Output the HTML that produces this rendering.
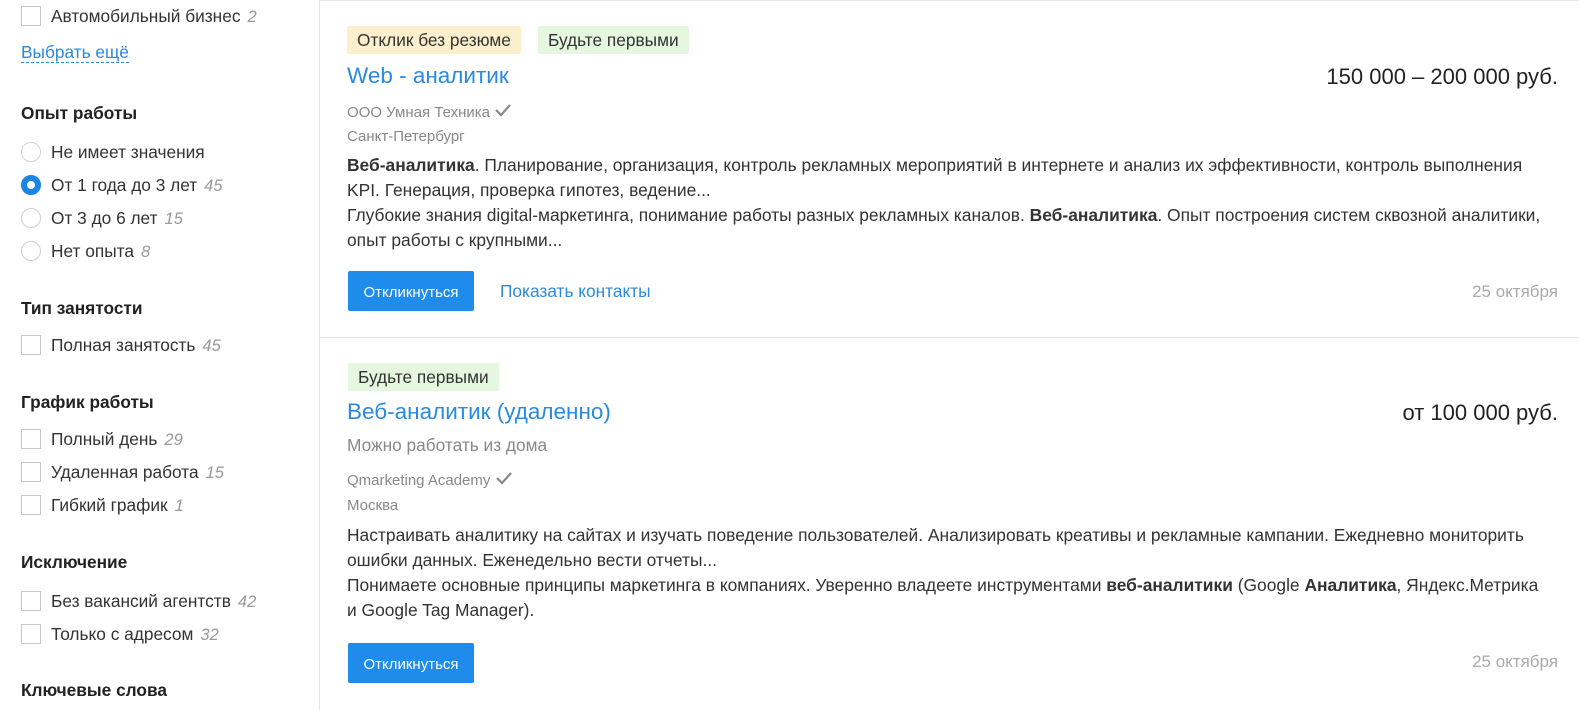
<!DOCTYPE html>
<html style="overflow:hidden;width:1579px;height:710px"><head><meta charset="utf-8"><style>
*{margin:0;padding:0;box-sizing:border-box}
body{width:1579px;height:710px;overflow:hidden;background:#fff;font-family:"Liberation Sans",Arial,sans-serif;color:#222;position:relative}
.a{position:absolute;white-space:nowrap}
.cb{position:absolute;width:20px;height:20px;border:1px solid #c8c8c8;background:#fff}
.rb{position:absolute;width:20px;height:20px;border:1px solid #d0d0d0;border-radius:50%;background:#fff}
.rb.on{border:6px solid #1a85e6}
.lbl{font-size:17.3px;color:#333}
.n{font-style:italic;color:#999;font-size:16.5px;margin-left:7px}
.h{font-size:17.3px;font-weight:bold;color:#222}
.tag{position:absolute;height:28px;line-height:28px;padding:0 10px;font-size:17.3px;color:#333;border-radius:2px}
.title{font-size:22.5px;color:#2a8ae0}
.sal{font-size:22px;color:#222}
.grey{font-size:15px;color:#888}
.txt{font-size:17.4px;color:#333;line-height:25px}
.btn{position:absolute;width:126px;height:40px;background:#1f8ceb;color:#fff;font-size:15px;text-align:center;line-height:43px;border-radius:2px}
.date{font-size:17px;color:#aaa}
</style></head><body>
<div class="a" style="left:319px;top:0;width:1px;height:710px;background:#e6e6e6"></div>
<div class="a" style="left:320px;top:0;width:1260px;height:1px;background:#e6e6e6"></div>
<div class="a" style="left:320px;top:337px;width:1260px;height:1px;background:#e6e6e6"></div>

<div class="cb" style="left:21px;top:6px"></div><div class="a lbl" style="left:51px;top:6px">Автомобильный бизнес<span class="n">2</span></div>
<div class="a" style="left:21px;top:42px;font-size:17.3px;color:#2a8ae0;border-bottom:1px dashed #2a8ae0;line-height:20px">Выбрать ещё</div>

<div class="a h" style="left:21px;top:103px">Опыт работы</div>
<div class="rb" style="left:21px;top:142px"></div><div class="a lbl" style="left:51px;top:142px">Не имеет значения</div>
<div class="rb on" style="left:21px;top:175px"></div><div class="a lbl" style="left:51px;top:175px">От 1 года до 3 лет<span class="n">45</span></div>
<div class="rb" style="left:21px;top:208px"></div><div class="a lbl" style="left:51px;top:208px">От 3 до 6 лет<span class="n">15</span></div>
<div class="rb" style="left:21px;top:241px"></div><div class="a lbl" style="left:51px;top:241px">Нет опыта<span class="n">8</span></div>

<div class="a h" style="left:21px;top:298px">Тип занятости</div>
<div class="cb" style="left:21px;top:335px"></div><div class="a lbl" style="left:51px;top:335px">Полная занятость<span class="n">45</span></div>

<div class="a h" style="left:21px;top:392px">График работы</div>
<div class="cb" style="left:21px;top:429px"></div><div class="a lbl" style="left:51px;top:429px">Полный день<span class="n">29</span></div>
<div class="cb" style="left:21px;top:462px"></div><div class="a lbl" style="left:51px;top:462px">Удаленная работа<span class="n">15</span></div>
<div class="cb" style="left:21px;top:495px"></div><div class="a lbl" style="left:51px;top:495px">Гибкий график<span class="n">1</span></div>

<div class="a h" style="left:21px;top:552px">Исключение</div>
<div class="cb" style="left:21px;top:591px"></div><div class="a lbl" style="left:51px;top:591px">Без вакансий агентств<span class="n">42</span></div>
<div class="cb" style="left:21px;top:624px"></div><div class="a lbl" style="left:51px;top:624px">Только с адресом<span class="n">32</span></div>
<div class="a h" style="left:21px;top:680px">Ключевые слова</div>

<!-- card 1 -->
<div class="tag" style="left:347px;top:26px;background:#fcf0cc">Отклик без резюме</div>
<div class="tag" style="left:538px;top:26px;background:#e6f7e0">Будьте первыми</div>
<div class="a title" style="left:347px;top:63px">Web - аналитик</div>
<div class="a sal" style="right:21px;top:64px">150 000 – 200 000 руб.</div>
<div class="a grey" style="left:347px;top:103px">ООО Умная Техника <svg width="18" height="14" viewBox="0 0 18 14" style="vertical-align:0"><path d="M2 7l5 5L16 2" stroke="#888" stroke-width="2.2" fill="none"/></svg></div>
<div class="a grey" style="left:347px;top:128px">Санкт-Петербург</div>
<div class="a txt" style="left:347px;top:153px"><b>Веб-аналитика</b>. Планирование, организация, контроль рекламных мероприятий в интернете и анализ их эффективности, контроль выполнения<br>KPI. Генерация, проверка гипотез, ведение...<br>Глубокие знания digital-маркетинга, понимание работы разных рекламных каналов. <b>Веб-аналитика</b>. Опыт построения систем сквозной аналитики,<br>опыт работы с крупными...</div>
<div class="btn" style="left:348px;top:271px">Откликнуться</div>
<div class="a" style="left:500px;top:281px;font-size:17.3px;color:#2a8ae0">Показать контакты</div>
<div class="a date" style="right:21px;top:282px">25 октября</div>

<!-- card 2 -->
<div class="tag" style="left:348px;top:363px;background:#e6f7e0">Будьте первыми</div>
<div class="a title" style="left:347px;top:399px">Веб-аналитик (удаленно)</div>
<div class="a sal" style="right:21px;top:400px">от 100 000 руб.</div>
<div class="a" style="left:347px;top:435px;font-size:17.3px;color:#888">Можно работать из дома</div>
<div class="a grey" style="left:347px;top:471px">Qmarketing Academy <svg width="18" height="14" viewBox="0 0 18 14" style="vertical-align:0"><path d="M2 7l5 5L16 2" stroke="#888" stroke-width="2.2" fill="none"/></svg></div>
<div class="a grey" style="left:347px;top:497px">Москва</div>
<div class="a txt" style="left:347px;top:523px">Настраивать аналитику на сайтах и изучать поведение пользователей. Анализировать креативы и рекламные кампании. Ежедневно мониторить<br>ошибки данных. Еженедельно вести отчеты...<br>Понимаете основные принципы маркетинга в компаниях. Уверенно владеете инструментами <b>веб-аналитики</b> (Google <b>Аналитика</b>, Яндекс.Метрика<br>и Google Tag Manager).</div>
<div class="btn" style="left:348px;top:643px">Откликнуться</div>
<div class="a date" style="right:21px;top:652px">25 октября</div>
</body></html>
